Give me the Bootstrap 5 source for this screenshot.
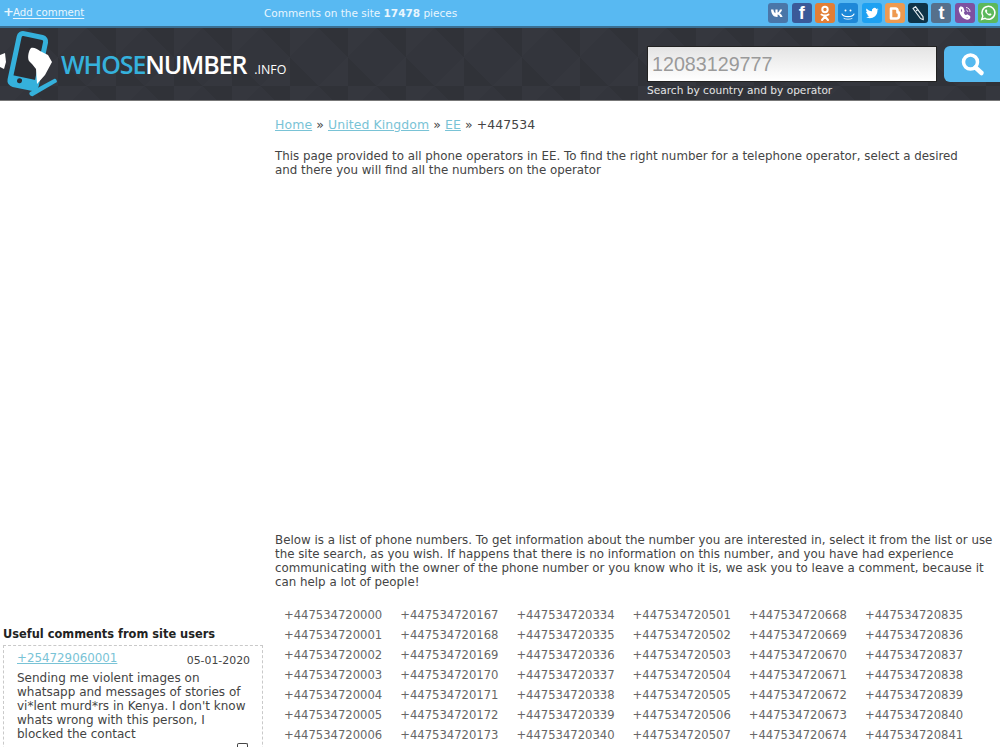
<!DOCTYPE html>
<html lang="en">
<head>
  <meta charset="UTF-8">
  <meta name="viewport" content="width=device-width, initial-scale=1">
  <title>+447534 - WhoseNumber.info</title>
  <link href="https://cdn.jsdelivr.net/npm/bootstrap@5.3.0/dist/css/bootstrap.min.css" rel="stylesheet">
  <style>
    body {
      font-family: "DejaVu Sans", Verdana, sans-serif;
      font-size: 11.85px;
      line-height: 14px;
      color: #444;
      background: #fff;
    }
    a { color: #79c3d6; }
    .page-clip { height: 747px; overflow: hidden; }
    .topbar {
      height: 28px;
      background: #58b9f2;
      border-bottom: 2px solid #3a6f92;
      color: #e8f6fe;
      font-size: 10.5px;
    }
    .add-link { width: 264px; padding-left: 3px; font-size: 10.2px; }
    .add-link a { color: #e8f6fe; text-underline-offset: 2px; margin-left: -1px; }
    .add-link b { font-size: 13px; line-height: 10px; }
    .social { gap: 3.3px; padding-right: 2px; }
    .soc {
      width: 20px;
      height: 20px;
      border-radius: 3px;
      font-family: "Liberation Sans", sans-serif;
      font-weight: 700;
      font-size: 18px;
      line-height: 20px;
      color: #fff;
    }
    .soc svg { width: 20px; height: 20px; display: block; }
    .hdr {
      height: 73px;
      background-color: #33353c;
      background-image:
        linear-gradient(135deg, rgba(255,255,255,.012) 25%, transparent 25%, transparent 75%, rgba(255,255,255,.012) 75%),
        linear-gradient(45deg, rgba(0,0,0,.06) 25%, transparent 25%, transparent 75%, rgba(0,0,0,.06) 75%);
      background-size: 58px 58px;
      border-bottom: 1px solid #777;
    }
    .logo-icon { width: 58px; height: 72px; flex: none; }
    .logo-txt {
      font-family: "Open Sans", sans-serif;
      font-size: 25px;
      font-weight: 600;
      letter-spacing: -1.1px;
      color: #fff;
      margin-left: 3px;
      line-height: 72px;
    }
    .logo-txt em { font-style: normal; color: #35b1dc; }
    .logo-txt small { font-size: 12.4px; margin-left: 8px; font-weight: 400; letter-spacing: 0; }
    .search-area { margin-left: auto; padding-top: 18px; width: 353px; }
    .search-box {
      width: 290px;
      height: 36px;
      background: linear-gradient(#e4e4e4, #fff);
      border: 1px solid #222;
      color: #9a9a9a;
      font-family: "Liberation Sans", Arial, sans-serif;
      font-size: 19.7px;
      line-height: 34px;
      padding-left: 4px;
    }
    .search-btn {
      width: 56px;
      height: 36px;
      background: #56b9ef;
      border-radius: 6px 0 0 6px;
      margin-left: 7px;
    }
    .search-hint { color: #e4e4e4; font-size: 10.6px; line-height: 16px; }
    .side { width: 263px; padding-left: 3px; padding-top: 526px; }
    .side h3 { font-size: 11.4px; font-weight: 700; line-height: 14px; margin: 0 0 4px; color: #222; }
    .cmt-box {
      border: 1px dashed #c9c9c9;
      padding: 5px 12px 0 13px;
      height: 120px;
      position: relative;
    }
    .cmt-date { font-size: 10.9px; margin-top: 3px; }
    .cmt-flag {
      position: absolute;
      right: 14px;
      top: 97px;
      width: 11px;
      height: 6px;
      border: 1.5px solid #444;
      border-bottom: 0;
      border-radius: 2px 2px 0 0;
    }
    .cmt-body { margin-top: 3px; font-size: 12px; }
    .content { padding-left: 12px; width: 737px; }
    .crumbs { font-size: 12.45px; padding-top: 16px; line-height: 16px; letter-spacing: .1px; }
    .txt-p { margin: 0; }
    .intro-p { margin-top: 16px; }
    .ad-gap { height: 356px; }
    .nums { margin-top: 16px; padding-left: 9px; }
    .num-row { height: 20px; line-height: 20px; font-size: 11.6px; color: #666; }
    .num-row span { width: 116.2px; flex: none; }
  </style>
</head>
<body>
<div class="page-clip">

  <!-- top strip -->
  <div class="topbar d-flex align-items-center">
    <div class="add-link"><b>+</b><a href="#">Add comment</a></div>
    <div>Comments on the site <b>17478</b> pieces</div>
    <div class="social d-flex ms-auto">
      <div class="soc text-center" style="background:#4a76a8"><svg viewBox="0 0 20 20"><path fill="#fff" d="M3 6.500h2.400c.3 2 1.200 3.500 2 3.800V6.500h2.200v3c1-.2 1.900-1.600 2.300-3h2.200c-.3 1.800-1.500 3.200-2.500 3.800 1.100.5 2.400 1.800 3 3.700h-2.400c-.4-1.300-1.500-2.300-2.600-2.500V14H9c-3.500 0-5.600-2.700-6-7.500z"/></svg></div>
      <div class="soc text-center" style="background:#3b5998">f</div>
      <div class="soc text-center" style="background:#e27e35"><svg viewBox="0 0 20 20"><g fill="none" stroke="#fff" stroke-width="2" stroke-linecap="round"><circle cx="10" cy="6.500" r="2.700"/><path d="M6.500 11.500c2 1.300 5 1.300 7 0M10 12.500v1M10 13.500l-3 3.500M10 13.500l3 3.500"/></g></svg></div>
      <div class="soc text-center" style="background:#1e88d8"><svg viewBox="0 0 20 20"><g fill="none" stroke="#fff" stroke-linecap="round"><path stroke-width="1.100" d="M4 11c1.500 3.500 10.500 3.500 12 0"/><path stroke-width=".8" d="M6 15.500c2.500 1 5.500 1 8 0"/></g><circle cx="7.500" cy="7.500" r="1" fill="#fff"/><circle cx="12.500" cy="7.500" r="1" fill="#fff"/></svg></div>
      <div class="soc text-center" style="background:#1da1f2"><svg viewBox="0 0 20 20"><path fill="#fff" d="M16.500 6.300c-.5.2-1 .4-1.500.4.500-.3 1-.8 1.200-1.400-.5.300-1.100.5-1.700.6a2.600 2.600 0 0 0-4.500 2.400C7.800 8.200 5.800 7.100 4.500 5.500c-.7 1.200-.3 2.700.8 3.500-.4 0-.8-.1-1.200-.3 0 1.300.9 2.400 2.100 2.600-.4.100-.8.100-1.200 0 .3 1.100 1.300 1.800 2.500 1.800-1 .8-2.300 1.200-3.800 1 3.800 2.400 11.900 1.200 11.800-7 .5-.2 1-.7 1.500-.8z"/></svg></div>
      <div class="soc text-center" style="background:#ee9a50"><svg viewBox="0 0 20 20"><path fill="none" stroke="#fff" stroke-width="2.600" stroke-linejoin="round" d="M6 15.500V5.500h4.500c1.500 0 2 1.200 2 2.200v1.800h1.500v3.500c0 1.700-1 2.500-2.500 2.500z"/></svg></div>
      <div class="soc text-center" style="background:#0f3347"><svg viewBox="0 0 20 20"><g fill="none" stroke="#e6eef2" stroke-width="1.200" stroke-linejoin="round"><path d="M5 5.500l2.500-1.800 7.500 10 .3 3-2.800-1.200z"/><path d="M8 8l2-1.500"/></g></svg></div>
      <div class="soc text-center" style="background:#56708b">t</div>
      <div class="soc text-center" style="background:#7d51a0"><svg viewBox="0 0 20 20"><path fill="none" stroke="#fff" stroke-width="2.200" stroke-linecap="round" d="M6 4.500c-1.500 1-1.500 3 0 6s3.500 4.500 5.500 5c2 .4 3-.8 2.700-1.700l-2-1.300-1.300 1c-1.700-.8-2.900-2.300-3.400-4l1-1.200-1-2.900c-.6-.6-1-.5-1.500-.9z"/><path fill="none" stroke="#fff" stroke-width=".9" d="M11 4.500c2.500.2 4 2 4 4.500M11.200 7c1 .2 1.600 1 1.600 2"/></svg></div>
      <div class="soc text-center" style="background:#5cb85c"><svg viewBox="0 0 20 20"><path fill="none" stroke="#fff" stroke-width="1.500" d="M3.800 16.300l1-3.200a6.500 6.500 0 1 1 2.300 2.300z"/><path fill="#fff" d="M7.800 6.500c-1 .5-1 2 .2 3.500s2.700 2.600 4 2.600c1 0 1.600-.7 1.500-1.500l-1.600-.8-.8.800c-1-.4-1.800-1.200-2.300-2.200l.6-.8-.7-1.700z"/></svg></div>
    </div>
  </div>

  <!-- logo + search -->
  <div class="hdr d-flex">
    <svg class="logo-icon" viewBox="0 0 58 72">
      <g transform="rotate(12 28 32)">
        <rect x="14.500" y="7" width="27" height="52" rx="4" fill="#2b2d33" stroke="#35b1dc" stroke-width="5"/>
        <rect x="14" y="50" width="28" height="9" fill="#35b1dc"/>
        <circle cx="24" cy="54" r="2.500" fill="#2b2d33"/>
      </g>
      <path fill="#fff" d="M31 20c3-1 6 1 9 3l8 4 4 7-7 13-8 9-1-15-4-5-3-3c-2-4 0-11 2-13z"/>
      <path fill="#35b1dc" d="M30 64l24-13c1-.5 2 0 2.500 1l.5 2-24 14c-2 1-5-2-3-4z"/>
      <path fill="#fff" d="M0 27l5-2 1 9-2 7-4-2z"/>
    </svg>
    <div class="logo-txt"><em>WHOSE</em>NUMBER<small>.INFO</small></div>
    <div class="search-area">
      <div class="d-flex">
        <div class="search-box">12083129777</div>
        <div class="search-btn d-flex align-items-center justify-content-center">
          <svg width="28" height="28" viewBox="0 0 28 28"><circle cx="12.500" cy="12" r="7" fill="none" stroke="#fff" stroke-width="3.500"/><path d="M17.500 17.500l6 5.500" stroke="#fff" stroke-width="4.500" stroke-linecap="round"/></svg>
        </div>
      </div>
      <div class="search-hint">Search by country and by operator</div>
    </div>
  </div>

  <div class="d-flex">
    <!-- left column -->
    <div class="side flex-shrink-0">
      <h3>Useful comments from site users</h3>
      <div class="cmt-box">
        <div class="d-flex justify-content-between">
          <a href="#">+254729060001</a>
          <span class="cmt-date">05-01-2020</span>
        </div>
        <div class="cmt-body">Sending me violent images on whatsapp and messages of stories of vi*lent murd*rs in Kenya. I don't know whats wrong with this person, I blocked the contact</div>
        <div class="cmt-flag"></div>
      </div>
    </div>

    <!-- main column -->
    <div class="content">
      <div class="crumbs"><a href="#">Home</a> » <a href="#">United Kingdom</a> » <a href="#">EE</a> » +447534</div>
      <p class="txt-p intro-p">This page provided to all phone operators in EE. To find the right number for a telephone operator, select a desired<br>and there you will find all the numbers on the operator</p>
      <div class="ad-gap"></div>
      <p class="txt-p">Below is a list of phone numbers. To get information about the number you are interested in, select it from the list or use the site search, as you wish. If happens that there is no information on this number, and you have had experience communicating with the owner of the phone number or you know who it is, we ask you to leave a comment, because it can help a lot of people!</p>
      <div class="nums">
        <div class="num-row d-flex"><span>+447534720000</span><span>+447534720167</span><span>+447534720334</span><span>+447534720501</span><span>+447534720668</span><span>+447534720835</span></div>
        <div class="num-row d-flex"><span>+447534720001</span><span>+447534720168</span><span>+447534720335</span><span>+447534720502</span><span>+447534720669</span><span>+447534720836</span></div>
        <div class="num-row d-flex"><span>+447534720002</span><span>+447534720169</span><span>+447534720336</span><span>+447534720503</span><span>+447534720670</span><span>+447534720837</span></div>
        <div class="num-row d-flex"><span>+447534720003</span><span>+447534720170</span><span>+447534720337</span><span>+447534720504</span><span>+447534720671</span><span>+447534720838</span></div>
        <div class="num-row d-flex"><span>+447534720004</span><span>+447534720171</span><span>+447534720338</span><span>+447534720505</span><span>+447534720672</span><span>+447534720839</span></div>
        <div class="num-row d-flex"><span>+447534720005</span><span>+447534720172</span><span>+447534720339</span><span>+447534720506</span><span>+447534720673</span><span>+447534720840</span></div>
        <div class="num-row d-flex"><span>+447534720006</span><span>+447534720173</span><span>+447534720340</span><span>+447534720507</span><span>+447534720674</span><span>+447534720841</span></div>
      </div>
    </div>
  </div>

</div>
<script src="https://cdn.jsdelivr.net/npm/bootstrap@5.3.0/dist/js/bootstrap.bundle.min.js"></script>
</body>
</html>
